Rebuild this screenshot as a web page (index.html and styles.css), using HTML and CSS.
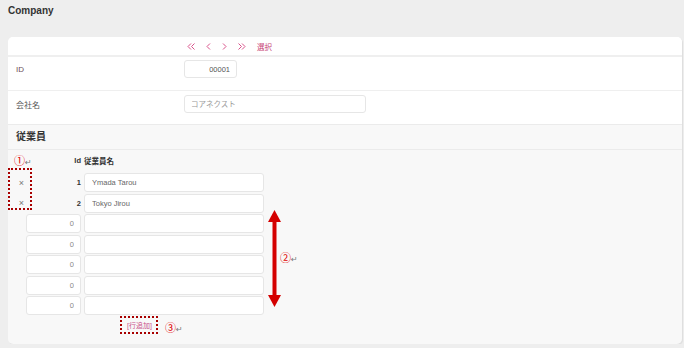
FILE: index.html
```html
<!DOCTYPE html>
<html lang="ja">
<head>
  <meta charset="UTF-8">
  <title>Company</title>
  <link rel="stylesheet" href="styles.css">
</head>
<body>
  <h1 class="page-title">Company</h1>

  <div class="card">
    <div class="nav">
      <svg class="nav-icon" width="8" height="7" viewBox="0 0 8 7"><polyline points="4,0.5 1,3.5 4,6.5"/><polyline points="7.5,0.5 4.5,3.5 7.5,6.5"/></svg>
      <svg class="nav-icon" width="5" height="7" viewBox="0 0 5 7"><polyline points="4,0.5 1,3.5 4,6.5"/></svg>
      <svg class="nav-icon" width="5" height="7" viewBox="0 0 5 7"><polyline points="1,0.5 4,3.5 1,6.5"/></svg>
      <svg class="nav-icon" width="8" height="7" viewBox="0 0 8 7"><polyline points="0.5,0.5 3.5,3.5 0.5,6.5"/><polyline points="4,0.5 7,3.5 4,6.5"/></svg>
      <span class="nav-select">選択</span>
    </div>

    <div class="form-row first">
      <label class="form-label id-label">ID</label>
      <input class="text-input id-input" type="text" value="00001">
    </div>

    <div class="form-row second">
      <label class="form-label">会社名</label>
      <input class="text-input name-input" type="text" placeholder="コアネクスト">
    </div>

    <div class="section-head">従業員</div>

    <div class="emp">
      <div class="emp-head">
        <span class="note"><span class="circled">①</span><span class="ret">↵</span></span>
        <span class="head-id">Id</span>
        <span class="head-name">従業員名</span>
      </div>

      <div class="emp-grid">
        <span class="del">×</span>
        <span class="emp-id">1</span>
        <input class="text-input emp-name" type="text" value="Ymada Tarou">

        <span class="del">×</span>
        <span class="emp-id">2</span>
        <input class="text-input emp-name" type="text" value="Tokyo Jirou">

        <span></span>
        <input class="text-input emp-id-input" type="text" value="0">
        <input class="text-input emp-name" type="text">

        <span></span>
        <input class="text-input emp-id-input" type="text" value="0">
        <input class="text-input emp-name" type="text">

        <span></span>
        <input class="text-input emp-id-input" type="text" value="0">
        <input class="text-input emp-name" type="text">

        <span></span>
        <input class="text-input emp-id-input" type="text" value="0">
        <input class="text-input emp-name" type="text">

        <span></span>
        <input class="text-input emp-id-input" type="text" value="0">
        <input class="text-input emp-name" type="text">
      </div>

      <div class="emp-add"><a class="add-link">[行追加]</a></div>
    </div>

    <!-- annotations -->
    <div class="mark-box box-del"></div>
    <svg class="mark-arrow" width="13" height="97" viewBox="0 0 13 97">
      <polygon points="6.5,0 0,12 13,12"/>
      <rect x="4.5" y="11" width="4" height="75"/>
      <polygon points="0,85 13,85 6.5,97"/>
    </svg>
    <span class="note note-rows"><span class="circled">②</span><span class="ret">↵</span></span>
    <div class="mark-box box-add"></div>
    <span class="note note-add"><span class="circled">③</span><span class="ret">↵</span></span>
  </div>
</body>
</html>
```

FILE: styles.css
```css
body {
  margin: 0;
  background: #eeeeee;
  font-family: "Liberation Sans", "Noto Sans CJK JP", sans-serif;
  font-size: 8px;
  color: #555;
}

.page-title {
  margin: 0;
  padding: 5px 8px 0;
  height: 32px;
  line-height: 12px;
  font-size: 10px;
  font-weight: bold;
  color: #333;
}

.card {
  position: relative;
  margin: 0 2px 0 8px;
  height: 307px;
  background: #f8f8f8;
  border-radius: 5px;
  box-shadow: 1px 1px 1px rgba(0, 0, 0, 0.07);
}

.nav {
  display: flex;
  align-items: center;
  gap: 11px;
  height: 18px;
  padding-left: 179px;
  background: #fff;
  border-radius: 5px 5px 0 0;
}

.nav-icon {
  fill: none;
  stroke: #d9528a;
  stroke-width: 1;
}

.nav-select {
  color: #c84576;
  font-size: 7.5px;
}

.form-row {
  display: flex;
  align-items: center;
  background: #fff;
  border-top: 1px solid #efefef;
}

.form-row.first {
  border-top-width: 2px;
  padding: 3px 0 12px;
}

.form-row.second {
  padding: 4px 0 11px;
}

.form-label {
  box-sizing: border-box;
  width: 176px;
  padding-left: 8px;
}

.id-label {
  color: #6b4b58;
}

.text-input {
  box-sizing: border-box;
  height: 18px;
  margin: 0;
  padding: 0 6px;
  border: 1px solid #e6e6e6;
  border-radius: 3px;
  background: #fff;
  font-family: inherit;
  font-size: 7.5px;
  color: #666;
  outline: none;
}

.text-input::placeholder {
  color: #999;
}

.id-input {
  width: 53px;
  text-align: right;
  color: #555;
}

.name-input {
  width: 182px;
}

.section-head {
  height: 24px;
  line-height: 24px;
  padding-left: 8px;
  border-top: 1px solid #ebebeb;
  border-bottom: 1px solid #ebebeb;
  font-size: 10px;
  font-weight: bold;
  color: #333;
}

.emp-head,
.emp-grid {
  display: grid;
  grid-template-columns: 18px 55px 183px;
  align-items: center;
}

.emp-head {
  height: 20px;
  margin-bottom: 3px;
  font-size: 7.5px;
  font-weight: bold;
  color: #333;
}

.head-id {
  text-align: right;
}

.head-name {
  padding-left: 3px;
}

.note {
  white-space: nowrap;
}

.emp-head .note {
  padding-left: 6px;
  font-weight: normal;
}

.circled {
  color: #e00000;
  font-size: 11px;
}

.ret {
  font-family: "DejaVu Sans", sans-serif;
  font-size: 8px;
  color: #777;
}

.emp-grid {
  grid-auto-rows: 19px;
  row-gap: 1.5px;
}

.emp-grid .text-input {
  height: 19px;
}

.del {
  padding-right: 2px;
  text-align: right;
  font-size: 9px;
  color: #777;
}

.emp-id {
  text-align: right;
  font-size: 7.5px;
  font-weight: bold;
  color: #333;
}

.emp-id-input {
  width: 55px;
  text-align: right;
  color: #888;
}

.emp-name {
  width: 180px;
  margin-left: 3px;
  padding-left: 7px;
}

.emp-add {
  padding: 4px 0 0 119px;
  line-height: 14px;
}

.add-link {
  color: #c9508a;
  font-size: 7px;
}

.mark-box {
  position: absolute;
  box-sizing: border-box;
  border: 2px dotted #a80000;
}

.box-del {
  left: 0;
  top: 131px;
  width: 24px;
  height: 42px;
}

.box-add {
  left: 112px;
  top: 279px;
  width: 38px;
  height: 18px;
}

.mark-arrow {
  position: absolute;
  left: 260px;
  top: 173px;
  fill: #d40000;
}

.note-rows {
  position: absolute;
  left: 272px;
  top: 212px;
}

.note-add {
  position: absolute;
  left: 157px;
  top: 282px;
}
```
